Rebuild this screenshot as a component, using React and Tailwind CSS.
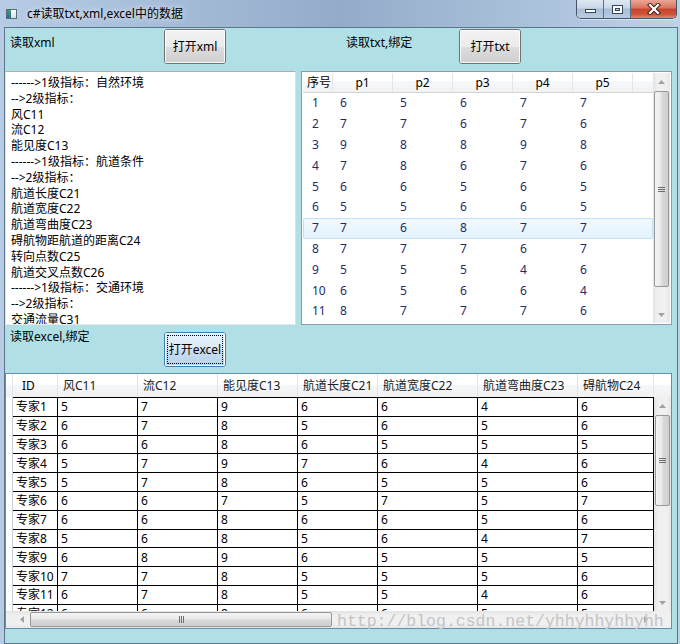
import React from 'react';

const xmlLines = [
  '------>1级指标：自然环境',
  '-->2级指标：',
  '风C11',
  '流C12',
  '能见度C13',
  '------>1级指标：航道条件',
  '-->2级指标：',
  '航道长度C21',
  '航道宽度C22',
  '航道弯曲度C23',
  '碍航物距航道的距离C24',
  '转向点数C25',
  '航道交叉点数C26',
  '------>1级指标：交通环境',
  '-->2级指标：',
  '交通流量C31',
];

const txtRows = [
  [1, 6, 5, 6, 7, 7],
  [2, 7, 7, 6, 7, 6],
  [3, 9, 8, 8, 9, 8],
  [4, 7, 8, 6, 7, 6],
  [5, 6, 6, 5, 6, 5],
  [6, 5, 5, 6, 6, 5],
  [7, 7, 6, 8, 7, 7],
  [8, 7, 7, 7, 6, 7],
  [9, 5, 5, 5, 4, 6],
  [10, 6, 5, 6, 6, 4],
  [11, 8, 7, 7, 7, 6],
];

const excelCols = ['风C11', '流C12', '能见度C13', '航道长度C21', '航道宽度C22', '航道弯曲度C23', '碍航物C24'];
const colW = ['w-[80px]', 'w-[80px]', 'w-[80px]', 'w-[80px]', 'w-[100px]', 'w-[100px]', 'w-[76px]'];

const excelRows = [
  ['专家1', 5, 7, 9, 6, 6, 4, 6],
  ['专家2', 6, 7, 8, 5, 6, 5, 6],
  ['专家3', 6, 6, 8, 6, 5, 5, 5],
  ['专家4', 5, 7, 9, 7, 6, 4, 6],
  ['专家5', 5, 7, 8, 6, 5, 5, 6],
  ['专家6', 6, 6, 7, 5, 7, 5, 7],
  ['专家7', 6, 6, 8, 6, 6, 5, 6],
  ['专家8', 5, 6, 8, 5, 6, 4, 7],
  ['专家9', 6, 8, 9, 6, 5, 5, 5],
  ['专家10', 7, 7, 8, 5, 5, 5, 6],
  ['专家11', 6, 7, 8, 5, 5, 4, 6],
  ['专家12', 6, 6, 8, 6, 6, 5, 5],
];

const Arrow = ({ dir }) => {
  const vertical = dir === 'up' || dir === 'down';
  const pts = {
    up: '0,4 3.5,0 7,4',
    down: '0,0 3.5,4 7,0',
    left: '4,0 0,3.5 4,7',
    right: '0,0 4,3.5 0,7',
  }[dir];
  return (
    <svg width={vertical ? 7 : 4} height={vertical ? 4 : 7} viewBox={vertical ? '0 0 7 4' : '0 0 4 7'}>
      <polygon points={pts} fill="#a3a3a3" />
    </svg>
  );
};

// win7 style vertical scrollbar
const VScroll = ({ thumb }) => (
  <div className="w-[17px] h-full shrink-0 flex flex-col bg-[linear-gradient(to_right,#e3e3e3,#f0f0f0_25%,#f0f0f0_75%,#e6e6e6)]">
    <div className="h-[17px] shrink-0 flex items-center justify-center">
      <Arrow dir="up" />
    </div>
    <div className="flex-1 px-px pt-px">
      <div className={`${thumb} rounded-[2px] border border-[#979797] bg-[linear-gradient(to_right,#f4f4f4,#e9e9e9_45%,#d8d8d8_55%,#cfcfcf)] flex items-center justify-center`}>
        <div className="flex flex-col gap-px">
          <div className="w-[7px] h-px bg-[#6e6e6e]" />
          <div className="w-[7px] h-px bg-[#6e6e6e]" />
          <div className="w-[7px] h-px bg-[#6e6e6e]" />
        </div>
      </div>
    </div>
    <div className="h-[17px] shrink-0 flex items-center justify-center">
      <Arrow dir="down" />
    </div>
  </div>
);

const HScroll = () => (
  <div className="w-[648px] h-full flex items-center bg-[linear-gradient(#e3e3e3,#f0f0f0_25%,#f0f0f0_75%,#e6e6e6)]">
    <div className="w-[7px] h-full" />
    <div className="w-[17px] h-full flex items-center justify-center">
      <Arrow dir="left" />
    </div>
    <div className="w-[302px] h-[15px] rounded-[2px] border border-[#979797] bg-[linear-gradient(#f4f4f4,#e9e9e9_45%,#d8d8d8_55%,#cfcfcf)] flex items-center justify-center">
      <div className="flex gap-px">
        <div className="w-px h-[7px] bg-[#6e6e6e]" />
        <div className="w-px h-[7px] bg-[#6e6e6e]" />
        <div className="w-px h-[7px] bg-[#6e6e6e]" />
      </div>
    </div>
    <div className="flex-1" />
    <div className="w-[17px] h-full flex items-center justify-center">
      <Arrow dir="right" />
    </div>
  </div>
);

const Win7Button = ({ children, focused, className = '' }) => (
  <div
    className={`w-[62px] h-[35px] shrink-0 rounded-[3px] border overflow-hidden ${
      focused ? 'border-[#3c7fb1]' : 'border-[#707070]'
    } ${className}`}
  >
    <div
      className={`h-full flex items-center justify-center leading-[16px] shadow-[inset_0_0_0_1px_rgba(255,255,255,0.85)] ${
        focused
          ? 'bg-[linear-gradient(#e6f1fa,#dbe9f6_50%,#c9def1_51%,#b8d3ec)]'
          : 'bg-[linear-gradient(#f2f2f2,#ebebeb_50%,#dddddd_51%,#cfcfcf)]'
      }`}
    >
      {focused ? (
        <div className="w-[56px] h-[29px] border border-dotted border-black flex items-center justify-center">
          {children}
        </div>
      ) : (
        children
      )}
    </div>
  </div>
);

const TitleBar = () => (
  <div className="h-[27px] flex items-start">
    {/* app icon */}
    <div className="ml-[6px] mt-[9px] w-[11px] h-[10px] border border-[#5b6b7b] bg-white flex">
      <div className="w-[4px] h-full bg-[linear-gradient(#3d9a7a,#2a6c92)]" />
      <div className="flex-1 bg-[linear-gradient(#ffffff,#d9dfe6)]" />
    </div>
    <div className="ml-[10px] mt-[6px] leading-[16px] [text-shadow:0_0_6px_rgba(255,255,255,0.9)]">
      c#读取txt,xml,excel中的数据
    </div>

    {/* caption buttons */}
    <div className="ml-auto mr-[3px] flex h-[19px] rounded-b-[5px] border border-t-0 border-[#44546a] overflow-hidden shadow-[0_1px_0_rgba(255,255,255,0.5)]">
      <div className="w-[27px] border-r border-[#5d6d82] bg-[linear-gradient(#dfe8f3,#c9d7e8_45%,#a9bdd5_50%,#b9cce1)] flex items-end justify-center pb-[5px]">
        <div className="w-[11px] h-[4px] border border-[#36465a] bg-white" />
      </div>
      <div className="w-[27px] border-r border-[#5d6d82] bg-[linear-gradient(#dfe8f3,#c9d7e8_45%,#a9bdd5_50%,#b9cce1)] flex items-center justify-center">
        <div className="w-[11px] h-[9px] border border-[#36465a] bg-white p-[2px] pt-[2px]">
          <div className="w-full h-full border border-[#36465a] bg-[#bccde1]" />
        </div>
      </div>
      <div className="w-[45px] bg-[linear-gradient(#eba595,#d9735e_45%,#c7432b_50%,#cf553b_80%,#e28a6d)] flex items-center justify-center">
        <svg width="14" height="12" viewBox="0 0 14 12">
          <path d="M3 2 L11 10 M11 2 L3 10" stroke="#3b2522" strokeWidth="4.2" strokeLinecap="square" />
          <path d="M3 2 L11 10 M11 2 L3 10" stroke="#ffffff" strokeWidth="2.2" strokeLinecap="square" />
        </svg>
      </div>
    </div>
  </div>
);

const ListView = () => (
  <div className="ml-[5px] w-[371px] h-full border border-[#8a9ab0] bg-white p-px flex">
    <div className="w-[350px] flex flex-col">
      <div className="h-[20px] shrink-0 flex border-b border-[#d5d5d5] bg-[linear-gradient(#ffffff,#ffffff_40%,#f7f8f9_41%,#f1f2f4)] leading-[19px]">
        <div className="w-[30px] pl-[4px] border-r border-[#e3e5e8]">序号</div>
        {['p1', 'p2', 'p3', 'p4', 'p5'].map((p) => (
          <div key={p} className="w-[60px] text-center border-r border-[#e3e5e8]">
            {p}
          </div>
        ))}
        <div className="flex-1" />
      </div>
      <div className="flex-1 overflow-hidden text-[#1f2a6c]">
        {txtRows.map((r) => (
          <div
            key={r[0]}
            className={`h-[20.8px] flex items-center rounded-[2px] ${
              r[0] === 7
                ? 'bg-[linear-gradient(#f3f9fe,#e1f2fd)] shadow-[inset_0_0_0_1px_#c2e1f6]'
                : ''
            }`}
          >
            <div className="w-[30px] pl-[9px]">{r[0]}</div>
            {r.slice(1).map((v, i) => (
              <div key={i} className="w-[60px] pl-[7px]">
                {v}
              </div>
            ))}
          </div>
        ))}
      </div>
    </div>
    <VScroll thumb="h-[196px]" />
  </div>
);

const DataGrid = () => (
  <div className="w-[667px] h-[256px] shrink-0 border border-[#688caf] bg-white flex flex-col">
    {/* header */}
    <div className="h-[23px] shrink-0 flex leading-[23px] bg-[linear-gradient(#ffffff,#ffffff_45%,#f6f7f8_50%,#f0f1f3)] text-[#202020] whitespace-nowrap">
      <div className="w-[7px] border-r border-[#e2e4e7]" />
      <div className="w-[45px] pl-[9px] border-r border-[#e2e4e7] text-black">ID</div>
      {excelCols.map((c, i) => (
        <div key={c} className={`${colW[i]} pl-[5px] overflow-hidden border-r border-[#e2e4e7]`}>
          {c}
        </div>
      ))}
      <div className="w-[17px]" />
    </div>

    {/* body */}
    <div className="h-[214px] shrink-0 flex">
      <div className="w-[648px] h-full overflow-hidden">
        {excelRows.map((r) => (
          <div key={r[0]} className="h-[18.8px] flex whitespace-nowrap">
            <div className="w-[7px] shrink-0 border-r border-[#c9cdd2]" />
            <div className="w-[45px] shrink-0 pl-[3px] pt-px border-t border-r border-black flex items-center">
              {r[0]}
            </div>
            {r.slice(1).map((v, i) => (
              <div
                key={i}
                className={`${colW[i]} shrink-0 pl-[3px] pt-px border-t border-r border-black flex items-center`}
              >
                {v}
              </div>
            ))}
          </div>
        ))}
      </div>
      <VScroll thumb="h-[91px]" />
    </div>

    {/* horizontal scroll */}
    <div className="h-[17px] shrink-0 flex">
      <HScroll />
      <div className="w-[17px] h-full bg-[#f0f0f0]" />
    </div>
  </div>
);

export default function App() {
  return (
    <div className="relative w-[680px] h-[644px] overflow-hidden bg-[linear-gradient(to_right,#b6cce4,#a5bcd8_25%,#94acca_50%,#a8bfd9_75%,#bed1e7)] font-['Noto_Sans','Noto_Sans_CJK_SC',sans-serif] text-[12px] text-black">
      <TitleBar />

      <div className="flex">
        <div className="w-[4px] shrink-0" />
        <div className="w-[674px] h-[617px] border border-[#5e738c] bg-[#b0e0e6] flex flex-col">
          {/* xml / txt controls */}
          <div className="h-[43px] shrink-0 flex items-start">
            <div className="w-[159px] pl-[5px] pt-[7px] leading-[16px]">读取xml</div>
            <Win7Button className="mt-px">打开xml</Win7Button>
            <div className="w-[120px] shrink-0" />
            <div className="w-[113px] pt-[7px] leading-[16px]">读取txt,绑定</div>
            <Win7Button className="mt-px">打开txt</Win7Button>
          </div>

          {/* xml text + txt list */}
          <div className="h-[254px] shrink-0 flex">
            <div className="w-[291px] h-full overflow-hidden border border-[#abadb3] border-l-[#e2e3ea] border-r-[#dbdfe6] border-b-[#e3e9ef] bg-white pl-[5px] pt-[3px] leading-[15.8px] whitespace-nowrap">
              {xmlLines.map((l, i) => (
                <div key={i}>{l}</div>
              ))}
            </div>
            <ListView />
          </div>

          {/* excel controls */}
          <div className="h-[48px] shrink-0 flex items-start">
            <div className="w-[159px] pl-[5px] pt-[4px] leading-[16px]">读取excel,绑定</div>
            <Win7Button focused className="mt-[7px]">
              打开excel
            </Win7Button>
          </div>

          <DataGrid />
        </div>
      </div>

      {/* watermark */}
      <div className="absolute left-[337px] top-[612px] font-['Liberation_Mono',monospace] text-[16.5px] leading-[20px] text-[#c4c4c4] whitespace-nowrap pointer-events-none">
        http://blog.csdn.net/yhhyhhyhhyhh
      </div>
    </div>
  );
}
